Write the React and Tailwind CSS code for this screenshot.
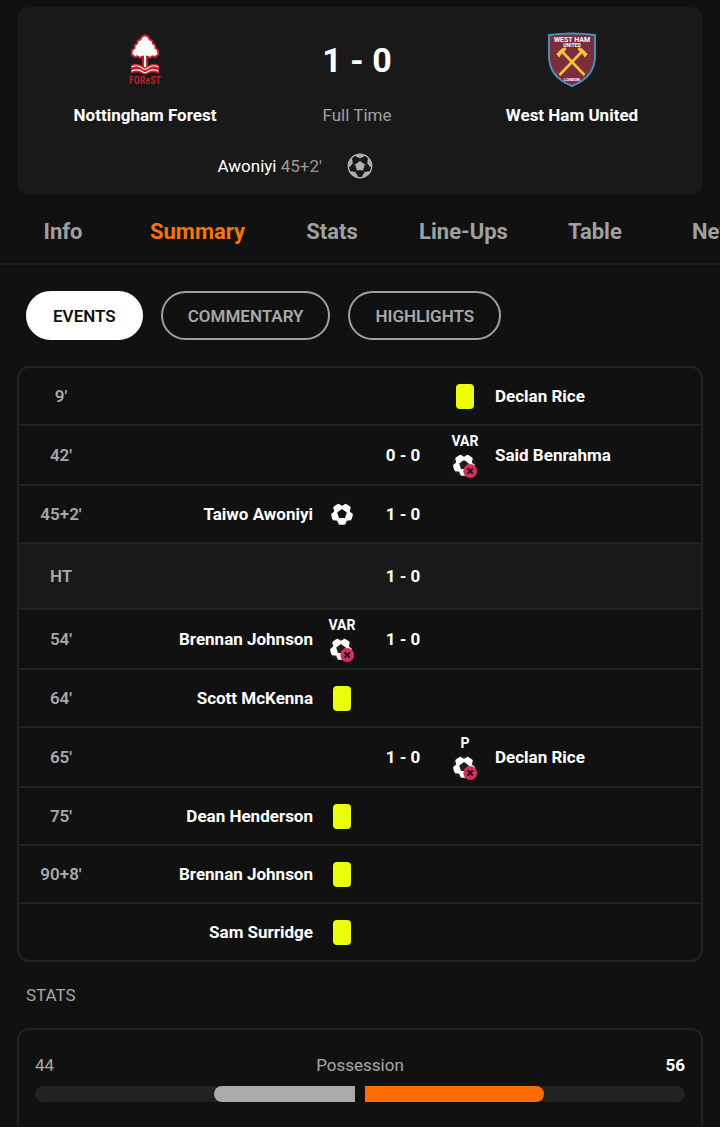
const events = [
  { minute: "9'", side: "away", kind: "card", player: "Declan Rice" },
  { minute: "42'", side: "away", kind: "void", label: "VAR", player: "Said Benrahma", score: "0 - 0" },
  { minute: "45+2'", side: "home", kind: "goal", player: "Taiwo Awoniyi", score: "1 - 0" },
  { minute: "HT", kind: "break", score: "1 - 0" },
  { minute: "54'", side: "home", kind: "void", label: "VAR", player: "Brennan Johnson", score: "1 - 0" },
  { minute: "64'", side: "home", kind: "card", player: "Scott McKenna" },
  { minute: "65'", side: "away", kind: "void", label: "P", player: "Declan Rice", score: "1 - 0" },
  { minute: "75'", side: "home", kind: "card", player: "Dean Henderson" },
  { minute: "90+8'", side: "home", kind: "card", player: "Brennan Johnson" },
  { minute: "", side: "home", kind: "card", player: "Sam Surridge" },
];

const tabs = ["Info", "Summary", "Stats", "Line-Ups", "Table", "News"];
const filters = ["Events", "Commentary", "Highlights"];
const turns = [0, 72, 144, 216, 288];

function ForestCrest() {
  const tree =
    "M15 3 L17.5 4 L19 6.5 L21.5 7.5 L22 10 L24.5 11.5 L24.5 14 L27 16 L27.5 19 L25 21 L22.5 20.3 L20 21.5 L17 20.5 L15 21 L13 20.5 L10 21.5 L7.5 20.3 L5 21 L2.5 19 L3 16 L5.5 14 L5.5 11.5 L8 10 L8.5 7.5 L11 6.5 L12.5 4 Z";
  return (
    <svg viewBox="0 0 30 54" className="h-[54px] w-[30px] overflow-visible" role="img" aria-label="Nottingham Forest crest">
      <path d="M15 18 V36" stroke="#c8202e" strokeWidth="6" />
      <g transform="scale(1 1.1)">
        <path d={tree} fill="#fff" stroke="#c8202e" strokeWidth="3.6" strokeLinejoin="round" />
        <path d={tree} fill="#fff" />
      </g>
      <path d="M15 19 V36" stroke="#fff" strokeWidth="2" />
      <path d="M1 32 Q8 29 13 33.5 Q15 35 17 33.5 Q22 29 29 32 V40.5 Q22 38 17 41 Q15 42 13 41 Q8 38 1 40.5 Z" fill="#c8202e" />
      <path d="M1.5 34 Q8 31 13 35.5 Q15 37 17 35.5 Q22 31 28.5 34 M1.5 38.2 Q8 35.2 13 39 Q15 40.3 17 39 Q22 35.2 28.5 38.2" fill="none" stroke="#ffe3e3" strokeWidth="1.1" />
      <text x="15" y="51" textAnchor="middle" fontFamily="'Roboto Condensed', 'Liberation Sans Narrow', Roboto, sans-serif" fontSize="10" fontWeight="700" fill="#b5212d">FOReST</text>
    </svg>
  );
}

function WestHamCrest() {
  return (
    <svg viewBox="0 0 50 56" className="h-[56px] w-[50px]" role="img" aria-label="West Ham United crest">
      <path d="M2 3 Q25 0 48 3 V24 Q48 45 25 54 Q2 45 2 24 Z" fill="#7c2c3b" stroke="#4590b8" strokeWidth="2" />
      <g fontFamily="Roboto, sans-serif" fontWeight="700" fill="#fff" textAnchor="middle">
        <text x="25" y="9.6" fontSize="7">WEST HAM</text>
        <text x="25" y="15.4" fontSize="5">UNITED</text>
        <text x="25" y="48.5" fontSize="4">LONDON</text>
      </g>
      <path d="M37.5 43 L15 19.5 M12.5 43 L35 19.5" stroke="#f5c33b" strokeWidth="2.6" />
      <path d="M9.3 22.3 L12.7 18.6 Q15 15.6 18.2 15.2 L19.4 17.4 Q17.8 19 15.6 20.8 Q13.6 23 12.4 25.4 Z M40.7 22.3 L37.3 18.6 Q35 15.6 31.8 15.2 L30.6 17.4 Q32.2 19 34.4 20.8 Q36.4 23 37.6 25.4 Z" fill="#f5c33b" />
    </svg>
  );
}

function OutlineBall() {
  return (
    <svg viewBox="0 0 26 26" className="size-[26px] text-[#b0b0b0]" aria-hidden="true">
      <circle cx="13" cy="13" r="11.7" fill="#191919" stroke="currentColor" strokeWidth="1.4" />
      <path d="M13 8 L17.9 11.5 L16 17.2 H10 L8.1 11.5 Z" fill="currentColor" />
      {turns.map((a) => (
        <g key={a} transform={`rotate(${a} 13 13)`} fill="currentColor">
          <path d="M8 2.1 Q13 0.4 18 2.1 L16.6 3.8 L13 5.2 L9.4 3.8 Z" />
          <path d="M12.6 5 H13.4 V8.5 H12.6 Z" opacity="0.3" />
        </g>
      ))}
    </svg>
  );
}

function BallShape({ patch }) {
  return (
    <>
      <circle cx="11" cy="11" r="11" fill={patch} />
      <circle cx="11" cy="11" r="10.8" fill="#fff" />
      <path d="M11 6 L15.8 9.4 L14 15 H8 L6.2 9.4 Z" fill={patch} />
      {turns.map((a) => (
        <path key={a} transform={`rotate(${a} 11 11)`} d="M7 -0.8 H15 L13.4 1.4 L11 2.8 L8.6 1.4 Z" fill={patch} />
      ))}
    </>
  );
}

function GoalBall() {
  return (
    <svg viewBox="0 0 22 22" className="mx-auto size-[22px]" role="img" aria-label="Goal">
      <BallShape patch="#111111" />
    </svg>
  );
}

function VoidBall({ label }) {
  return (
    <div className="flex flex-col items-center gap-[5px] pt-[7px] pb-[6px]">
      <span className="text-sm leading-4 font-bold text-white">{label}</span>
      <svg viewBox="0 0 24 24" className="size-6" role="img" aria-label="No goal">
        <BallShape patch="#1f1f1f" />
        <circle cx="17.2" cy="17" r="6.9" fill="#d42e5b" />
        <path d="M14.6 14.4 L19.8 19.6 M19.8 14.4 L14.6 19.6" stroke="#240a12" strokeWidth="1.9" />
      </svg>
    </div>
  );
}

function EventIcon({ event }) {
  if (event.kind === "goal") return <GoalBall />;
  if (event.kind === "void") return <VoidBall label={event.label} />;
  return <span role="img" aria-label="Yellow card" className="mx-auto block h-[25px] w-[18px] rounded bg-[#ecff0a]" />;
}

function EventRow({ event }) {
  const home = event.side === "home";
  const away = event.side === "away";
  const isBreak = event.kind === "break";
  return (
    <tr
      className={
        isBreak
          ? "h-[66px] bg-[#191919] *:border-b-2 *:border-[#222222]"
          : "h-[58px] *:border-b-2 *:border-[#222222] last:h-14 last:*:border-b-0"
      }
    >
      <th scope="row" className="pr-1 text-center font-semibold text-[#a8a8a8]">{event.minute}</th>
      <td className="text-right">{home && event.player}</td>
      <td>{home && <EventIcon event={event} />}</td>
      <td className="text-center">{event.score}</td>
      <td>{away && <EventIcon event={event} />}</td>
      <td className="text-left">{away && event.player}</td>
    </tr>
  );
}

function StatBar({ label, home, away }) {
  return (
    <div>
      <div className="grid grid-cols-3 leading-6 text-[#a8a8a8]">
        <span>{home}</span>
        <span className="text-center">{label}</span>
        <span className="text-right font-bold text-white">{away}</span>
      </div>
      <div className="mt-[9px] flex gap-[10px]">
        <div className="flex h-4 flex-1 justify-end overflow-hidden rounded-l-full bg-[#222222]">
          <div className="rounded-l-full bg-[#aaaaaa]" style={{ width: `${home}%` }} />
        </div>
        <div className="flex h-4 flex-1 overflow-hidden rounded-r-full bg-[#222222]">
          <div className="rounded-r-full bg-[#ff6d00]" style={{ width: `${away}%` }} />
        </div>
      </div>
    </div>
  );
}

export default function App() {
  return (
    <div className="min-h-screen overflow-x-hidden bg-[#111111] pt-[7px] font-['Roboto',sans-serif] text-[17px] text-white">
      <header className="mx-[17px] rounded-xl bg-[#191919] pt-[25px] pb-4">
        <div className="grid grid-cols-[256fr_168fr_262fr] justify-items-center leading-6">
          <div className="flex flex-col items-center gap-[15px]">
            <div className="flex h-14 items-center"><ForestCrest /></div>
            <h2 className="font-bold">Nottingham Forest</h2>
          </div>
          <div className="flex flex-col items-center gap-[15px]">
            <p className="flex h-14 items-center text-[34px] font-bold">1 - 0</p>
            <p className="text-[#a0a0a0]">Full Time</p>
          </div>
          <div className="flex flex-col items-center gap-[15px]">
            <div className="flex h-14 items-center"><WestHamCrest /></div>
            <h2 className="font-bold">West Ham United</h2>
          </div>
        </div>
        <div className="mt-[26px] grid grid-cols-[1fr_auto_1fr] items-center gap-[25px] leading-6">
          <p className="text-right">
            Awoniyi <span className="text-[#999999]">45+2'</span>
          </p>
          <OutlineBall />
        </div>
      </header>

      <nav className="flex border-b-2 border-[#1e1e1e] pt-[13px] pb-[7px] pl-[6px] text-[22px] leading-6 font-bold">
        {tabs.map((tab) => (
          <a
            key={tab}
            href={`#${tab.toLowerCase()}`}
            className={`min-w-[114px] shrink-0 py-3 text-center ${tab === "News" ? "px-10" : "px-[30px]"} ${
              tab === "Summary" ? "text-[#f9730c]" : "text-[#a0a0a0]"
            }`}
          >
            {tab}
          </a>
        ))}
      </nav>

      <main className="px-[17px] pt-[26px]">
        <div className="flex gap-[18px] px-[9px]">
          {filters.map((name) => (
            <button
              key={name}
              type="button"
              className={`h-[49px] rounded-full border-2 px-[25px] leading-6 font-semibold uppercase ${
                name === "Events" ? "border-white bg-white text-[#111111]" : "border-[#a0a0a0] text-[#a8a8a8]"
              }`}
            >
              {name}
            </button>
          ))}
        </div>

        <div className="mt-[26px] overflow-hidden rounded-xl border-2 border-[#222222]">
          <table className="w-full table-fixed border-separate border-spacing-0 text-[17px] leading-6 font-bold">
            <colgroup>
              <col className="w-[88px]" />
              <col />
              <col className="w-[58px]" />
              <col className="w-16" />
              <col className="w-[60px]" />
              <col />
            </colgroup>
            <tbody>
              {events.map((event, i) => (
                <EventRow key={i} event={event} />
              ))}
            </tbody>
          </table>
        </div>

        <h3 className="mt-[21px] px-[9px] leading-6 text-[#a8a8a8]">STATS</h3>
        <section className="mt-[21px] rounded-t-xl border-2 border-b-0 border-[#222222] px-4 pt-[23px] pb-6">
          <StatBar label="Possession" home={44} away={56} />
        </section>
      </main>
    </div>
  );
}
